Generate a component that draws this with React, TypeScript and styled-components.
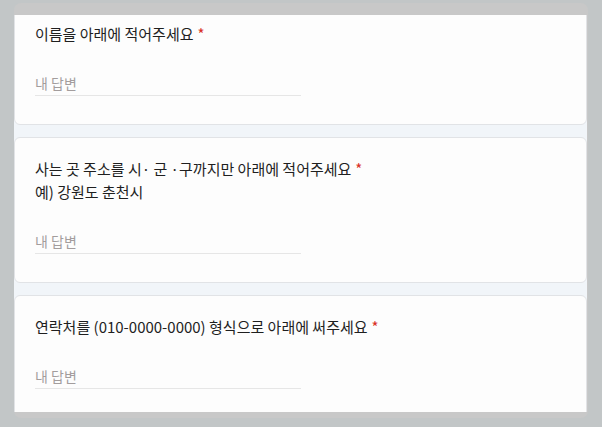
import React, { useLayoutEffect, useRef } from 'react'
import styled, { createGlobalStyle } from 'styled-components'

const GlobalStyle = createGlobalStyle`
    html, body {
        margin: 0;
        padding: 0;
        background: #c2c6c7;
    }
    body {
        font-family: "Noto Sans CJK KR", "Noto Sans", sans-serif;
    }
`

const Page = styled.div`
    padding: 3px 14px 9px 14px;
`

const Frame = styled.div`
    height: 415px;
    box-sizing: border-box;
    display: flex;
    flex-direction: column;
    padding: 12px 1px 6px 0;
    background: #c8c8c8;
    border-radius: 7px;
`

const Viewport = styled.div`
    flex: 1;
    overflow: hidden;
    background: #f1f5f9;
`

const List = styled.div`
    display: flex;
    flex-direction: column;
    gap: 12px;
    padding-bottom: 40px;
`

const Card = styled.div`
    background: #fdfdfd;
    border: 1px solid #e1e3e6;
    border-radius: 6px;
    padding: 21px 20px 28px;
`

const Title = styled.div`
    font-size: 15px;
    line-height: 20px;
    color: #1f1f1f;
`

const Required = styled.span`
    color: #d93025;
    margin-left: 4px;
`

const Description = styled.div`
    margin-top: 3px;
    font-size: 15px;
    line-height: 20px;
    color: #1f1f1f;
`

const Answer = styled.input`
    display: block;
    margin-top: 26px;
    width: 266px;
    height: 26px;
    box-sizing: border-box;
    padding: 0;
    border: none;
    border-bottom: 1px solid #e6e6e6;
    background: transparent;
    outline: none;
    font-family: inherit;
    font-size: 14px;
    color: #202124;

    &::placeholder {
        color: #a39d9d;
    }
`

type Question = {
    title: string
    description?: string
}

const questions: Question[] = [
    { title: '이름을 아래에 적어주세요' },
    { title: '사는 곳 주소를 시· 군 ·구까지만 아래에 적어주세요', description: '예) 강원도 춘천시' },
    { title: '연락처를 (010-0000-0000) 형식으로 아래에 써주세요' },
]

const QuestionCard: React.FC<{ q: Question }> = ({ q }) => (
    <Card>
        <Title>
            {q.title}
            <Required>*</Required>
        </Title>
        {q.description && <Description>{q.description}</Description>}
        <Answer type='text' placeholder='내 답변' />
    </Card>
)

const App: React.FC = () => {
    const viewRef = useRef<HTMLDivElement>(null)

    // form is scrolled a little past the top of the first card
    useLayoutEffect(() => {
        if (viewRef.current) viewRef.current.scrollTop = 13
    }, [])

    return (
        <Page>
            <GlobalStyle />
            <Frame>
                <Viewport ref={viewRef}>
                    <List>
                        {questions.map((q, i) => (
                            <QuestionCard key={i} q={q} />
                        ))}
                    </List>
                </Viewport>
            </Frame>
        </Page>
    )
}

export default App
